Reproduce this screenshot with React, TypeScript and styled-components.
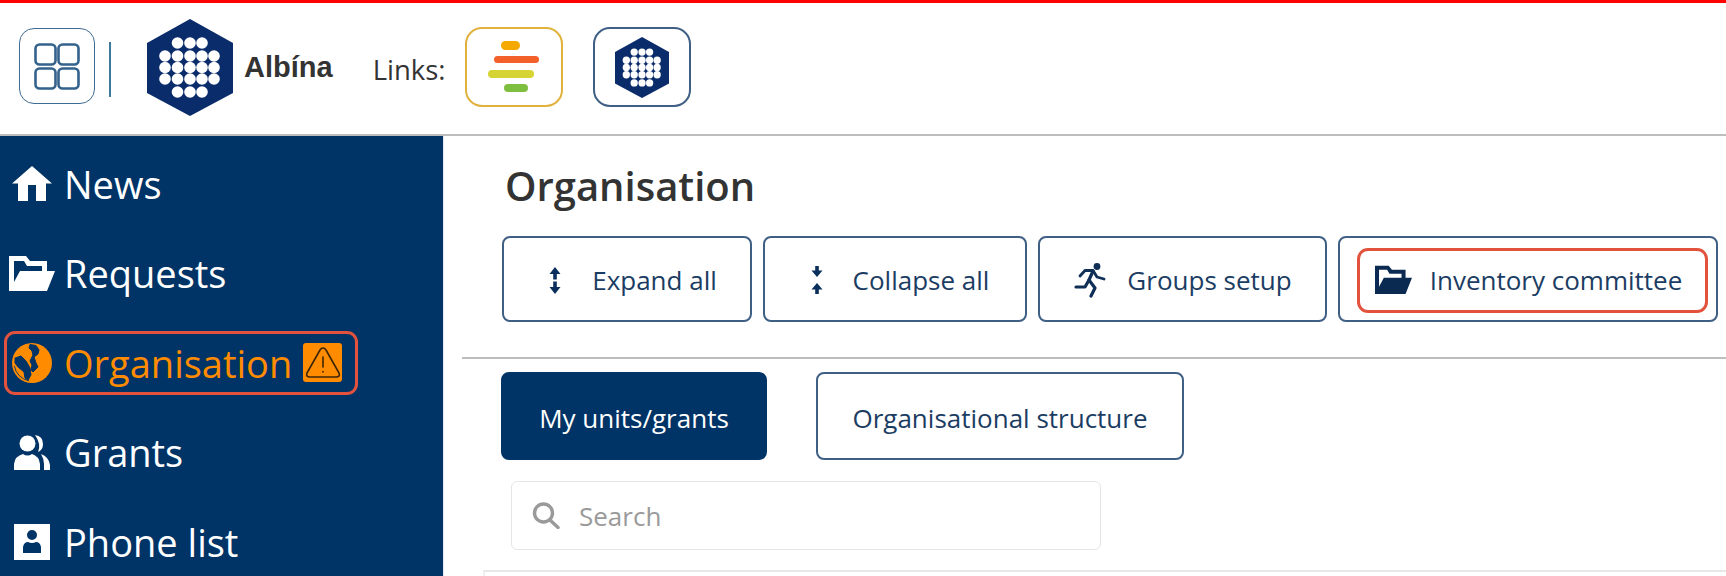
import React from 'react'
import styled, { createGlobalStyle } from 'styled-components'

const GlobalStyle = createGlobalStyle`
  html, body {
    margin: 0;
    padding: 0;
    background: #fff;
  }
  body {
    font-family: 'Open Sans', 'Noto Sans', sans-serif;
    overflow: hidden;
  }
`

const NAVY = '#003366'
const ORANGE = '#ff8c00'
const BORDER = '#3f5f85'

const Page = styled.div`
  width: 1726px;
  height: 576px;
  overflow: hidden;
  display: flex;
  flex-direction: column;
  border-top: 3px solid #ff0000;
  box-sizing: border-box;
`
const TopBar = styled.header`
  height: 133px;
  flex: none;
  box-sizing: border-box;
  border-bottom: 2px solid #bdbdbd;
  display: flex;
  align-items: center;
  padding: 0 0 2px 19px;
`
const GridButton = styled.button`
  width: 76px;
  height: 76px;
  margin-top: -3px;
  padding: 0;
  background: #fff;
  border: 1.5px solid #3f6a92;
  border-radius: 15px;
  display: flex;
  align-items: center;
  justify-content: center;
`
const Divider = styled.span`
  width: 2px;
  height: 55px;
  margin: 4px 36px 0 14px;
  background: #3d7a9c;
`
const BrandName = styled.span`
  margin: 0 0 1px 11px;
  font: bold 29px 'Liberation Sans', Arial, sans-serif;
  color: #333;
`
const LinksLabel = styled.span`
  margin: 3px 0 0 40px;
  font-size: 27.5px;
  color: #333;
`
const LinkButton = styled.a<{ $color: string; $gap: number }>`
  width: 98px;
  height: 80px;
  margin: -1px 0 0 ${(p) => p.$gap}px;
  box-sizing: border-box;
  border: 2px solid ${(p) => p.$color};
  border-radius: 17px;
  display: flex;
  align-items: center;
  justify-content: center;
`
const Body = styled.div`
  flex: 1;
  display: flex;
  min-height: 0;
`
const Sidebar = styled.nav`
  width: 443px;
  flex: none;
  background: ${NAVY};
  padding: 16px 0 0 4px;
  box-sizing: border-box;
  display: grid;
  grid-auto-rows: 63.5px;
  row-gap: 26px;
  align-content: start;
`
const NavItem = styled.a<{ $active?: boolean }>`
  width: 354px;
  box-sizing: border-box;
  display: flex;
  align-items: center;
  border: 3px solid ${(p) => (p.$active ? '#e2523c' : 'transparent')};
  border-radius: 11px;
  color: ${(p) => (p.$active ? ORANGE : '#fff')};
  font-size: 38px;
`
const NavIcon = styled.span`
  width: 57px;
  flex: none;
  display: flex;
  align-items: center;
  justify-content: center;
  padding-right: 7px;
  box-sizing: border-box;
`
const WarningBadge = styled.span`
  width: 39px;
  height: 39px;
  margin-left: 11px;
  background: ${ORANGE};
  border-radius: 3px;
  display: flex;
  align-items: center;
  justify-content: center;
`
const Main = styled.main`
  flex: 1;
  min-width: 0;
  border-left: 1px solid #e4e8ee;
  padding-left: 18px;
  display: flex;
  flex-direction: column;
`
const TitleBlock = styled.div`
  padding: 0 0 35px 40px;
  border-bottom: 2px solid #bdbdbd;
`
const Title = styled.h1`
  margin: 0;
  padding: 23px 0 0 3px;
  height: 100px;
  box-sizing: border-box;
  font-size: 40px;
  line-height: 54px;
  font-weight: 600;
  color: #333;
`
const Toolbar = styled.div`
  display: flex;
  gap: 11px;
`
const ToolButton = styled.button<{ $width: number; $gap: number; $shift?: number }>`
  width: ${(p) => p.$width}px;
  height: 86px;
  padding: 2px 0 0 ${(p) => p.$shift ?? 0}px;
  box-sizing: border-box;
  background: #fff;
  border: 2px solid ${BORDER};
  border-radius: 8px;
  display: flex;
  align-items: center;
  justify-content: center;
  gap: ${(p) => p.$gap}px;
  font: 26px 'Open Sans', sans-serif;
  color: #1c3d63;
`
const Highlight = styled.span`
  width: 351px;
  height: 65px;
  padding-right: 8px;
  box-sizing: border-box;
  border: 3px solid #e2523c;
  border-radius: 11px;
  display: flex;
  align-items: center;
  justify-content: center;
  gap: 18px;
`
const DarkIcon = styled.span`
  display: flex;
  color: #0b2a52;
`
const Tabs = styled.div`
  display: flex;
  gap: 49px;
  padding: 13px 0 0 39px;
`
const Tab = styled.button<{ $active?: boolean; $width: number }>`
  width: ${(p) => p.$width}px;
  height: 88px;
  padding: 3px 0 0;
  box-sizing: border-box;
  background: ${(p) => (p.$active ? NAVY : '#fff')};
  border: 2px solid ${(p) => (p.$active ? NAVY : BORDER)};
  border-radius: 8px;
  font: 26px 'Open Sans', sans-serif;
  color: ${(p) => (p.$active ? '#fff' : '#1c3d63')};
`
const SearchBox = styled.label`
  width: 590px;
  height: 69px;
  margin: 21px 0 0 49px;
  box-sizing: border-box;
  flex: none;
  border: 1.5px solid #e6e6e6;
  border-radius: 6px;
  display: flex;
  align-items: center;
  padding-left: 20px;
  gap: 19px;
`
const SearchInput = styled.input`
  flex: 1;
  min-width: 0;
  border: 0;
  outline: 0;
  padding: 0;
  font: 26px 'Open Sans', sans-serif;
  color: #333;
  &::placeholder {
    color: #9a9a9a;
    opacity: 1;
  }
`
const Panel = styled.div`
  flex: 1;
  margin: 20px 0 0 21px;
  border-top: 2px solid #e8e8e8;
  border-left: 2px solid #f0f0f0;
`

const dotRows: number[][] = [
  [37.5, 50, 62],
  [25, 37.5, 50, 62, 74],
  [25, 37.5, 50, 62, 74],
  [25, 37.5, 50, 62, 74],
  [37.5, 50, 62],
]
const dotY = [28, 41, 52.5, 64, 77]

const HexLogo = ({ height }: { height: number }) => (
  <svg viewBox="7 4 86 97" height={height} width={(height * 86) / 97}>
    <polygon points="50,4 93,28 93,78 50,101 7,78 7,28" fill="#0a2c6b" />
    {dotRows.map((row, i) =>
      row.map((x) => <circle key={`${i}-${x}`} cx={x} cy={dotY[i]} r={5.8} fill="#fff" />),
    )}
  </svg>
)

const GridIcon = () => (
  <svg width="46" height="47" viewBox="0 0 46 47" fill="none" stroke="#34628c" strokeWidth="2.6">
    <rect x="1.5" y="1.5" width="20" height="20" rx="4" />
    <rect x="24.5" y="1.5" width="20" height="20" rx="4" />
    <rect x="1.5" y="25.5" width="20" height="20" rx="4" />
    <rect x="24.5" y="25.5" width="20" height="20" rx="4" />
  </svg>
)

const BarsLogo = () => (
  <svg width="52" height="52" viewBox="0 0 52 52">
    <rect x="13" y="0" width="19" height="9" rx="4.5" fill="#f5a800" />
    <rect x="6" y="15" width="45" height="7" rx="3.5" fill="#f4602a" />
    <rect x="0" y="29" width="46" height="8" rx="4" fill="#d6d435" />
    <rect x="16" y="43" width="24" height="8" rx="4" fill="#7fbf3f" />
  </svg>
)

const HomeIcon = () => (
  <svg width="40" height="35" viewBox="0 0 40 35" fill="currentColor">
    <path d="M20 0 L40 17.5 H34 V35 H24 V19 H16 V35 H6 V17.5 H0 Z" />
  </svg>
)

const FolderIcon = ({ size = 46 }: { size?: number }) => (
  <svg width={size} height={(size * 37) / 46} viewBox="0 0 46 37" fill="currentColor">
    <path
      fillRule="evenodd"
      d="M0 1 H17 L21 6 H38 V16 H46 L38 36 H0 Z M5 6 V27 L11 16 H33 V11 H18 L15 6 Z"
    />
  </svg>
)

const GlobeIcon = () => (
  <svg width="40" height="40" viewBox="0 0 40 40">
    <circle cx="20" cy="20" r="20" fill="currentColor" />
    <path fill="none" stroke={NAVY} strokeWidth="0.9" d="M2.4 23 A18 18 0 0 0 17 37.8" />
    <path
      fill={NAVY}
      stroke={NAVY}
      strokeWidth="1"
      strokeLinejoin="round"
      d="M18 1.5 L24 2.5 L27 7 L26 11 L22 14 L24 20 L26 24 L21 29 L19 27 L20 22 L18 18 L21 12 L20 8 L17 5 Z"
    />
    <path
      fill={NAVY}
      stroke={NAVY}
      strokeWidth="1"
      strokeLinejoin="round"
      d="M3 15 L9 13 L14 18 L18 25 L19 32 L16 37 L13 35 L12 29 L6 24 L3 20 Z"
    />
  </svg>
)

const UsersIcon = () => (
  <svg width="36" height="35" viewBox="0 0 36 35" fill="currentColor">
    <circle cx="13.5" cy="8.5" r="8" />
    <path d="M0 35 V29 Q1 21 9 19 Q13.5 22 18 19 Q25 21 26 29 V35 Z" />
    <path d="M21 0 Q29 1 29 9 Q29 15 24 17 Q27.5 9 21 0 Z" />
    <path d="M27 19 Q35 22 36 30 V35 H30 V29 Q30 24 27 19 Z" />
  </svg>
)

const ContactIcon = () => (
  <svg width="36" height="36" viewBox="0 0 36 36" fill="currentColor">
    <path
      fillRule="evenodd"
      d="M0 0 H36 V36 H0 Z M18 6 A5 5 0 1 0 18 16 A5 5 0 1 0 18 6 Z M9 29 H27 V23 Q26 18 22 18 Q18 20 14 18 Q10 18 9 23 Z"
    />
  </svg>
)

const AlertIcon = () => (
  <svg width="36" height="33" viewBox="0 0 36 33" fill="none" stroke="#3d2606" strokeWidth="1.6" strokeLinecap="round" strokeLinejoin="round">
    <path d="M18 2 Q19.8 2 21 4 L34 27 Q35.5 31 31 31 H5 Q0.5 31 2 27 L15 4 Q16.2 2 18 2 Z" />
    <path d="M18 11 V21" />
    <path d="M18 25.5 V26" />
  </svg>
)

const ExpandIcon = () => (
  <svg width="12" height="27" viewBox="0 0 12 27" fill="#0b2f5c">
    <path d="M6 0 L11.5 7 H7.8 V12.5 H4.2 V7 H0.5 Z" />
    <path d="M6 27 L11.5 20 H7.8 V14.5 H4.2 V20 H0.5 Z" />
  </svg>
)

const CollapseIcon = () => (
  <svg width="12" height="28" viewBox="0 0 12 28" fill="#0b2f5c">
    <path d="M6 11 L11.5 4.5 H7.8 V0 H4.2 V4.5 H0.5 Z" />
    <path d="M6 17 L11.5 23.5 H7.8 V28 H4.2 V23.5 H0.5 Z" />
  </svg>
)

const RunnerIcon = () => (
  <svg width="33" height="36" viewBox="6 5 33 36" fill="none" stroke="#0f2f57" strokeWidth="2.8" strokeLinecap="round" strokeLinejoin="round">
    <circle cx="30" cy="9.5" r="3.4" fill="#0f2f57" stroke="none" />
    <path d="M13 19 L18 13.5 H26 L30 20 L37 22" />
    <path d="M26 14 L22 23 L28 31 L24 39" strokeWidth="3.2" />
    <path d="M22 23 L18 30 H9" strokeWidth="3.2" />
  </svg>
)

const SearchIcon = () => (
  <svg width="28" height="27" viewBox="0 0 28 27" fill="none" stroke="#9a9a9a" strokeWidth="3.4" strokeLinecap="round">
    <circle cx="11.5" cy="11" r="9" />
    <path d="M18 18 L26 25.5" />
  </svg>
)

const navItems = [
  { label: 'News', icon: <HomeIcon /> },
  { label: 'Requests', icon: <FolderIcon /> },
  { label: 'Organisation', icon: <GlobeIcon />, active: true },
  { label: 'Grants', icon: <UsersIcon /> },
  { label: 'Phone list', icon: <ContactIcon /> },
]

const App = () => {
  return (
    <Page>
      <GlobalStyle />
      <TopBar>
        <GridButton>
          <GridIcon />
        </GridButton>
        <Divider />
        <HexLogo height={97} />
        <BrandName>Albína</BrandName>
        <LinksLabel>Links:</LinksLabel>
        <LinkButton $color="#e0b23c" $gap={19}>
          <BarsLogo />
        </LinkButton>
        <LinkButton $color={BORDER} $gap={30}>
          <HexLogo height={61} />
        </LinkButton>
      </TopBar>
      <Body>
        <Sidebar>
          {navItems.map((item) => (
            <NavItem key={item.label} $active={item.active}>
              <NavIcon>{item.icon}</NavIcon>
              {item.label}
              {item.active && (
                <WarningBadge>
                  <AlertIcon />
                </WarningBadge>
              )}
            </NavItem>
          ))}
        </Sidebar>
        <Main>
          <TitleBlock>
            <Title>Organisation</Title>
            <Toolbar>
              <ToolButton $width={250} $gap={31} $shift={12}>
                <ExpandIcon />
                Expand all
              </ToolButton>
              <ToolButton $width={264} $gap={30} $shift={10}>
                <CollapseIcon />
                Collapse all
              </ToolButton>
              <ToolButton $width={289} $gap={21}>
                <RunnerIcon />
                Groups setup
              </ToolButton>
              <ToolButton $width={380} $gap={0} $shift={9}>
                <Highlight>
                  <DarkIcon>
                    <FolderIcon size={37} />
                  </DarkIcon>
                  Inventory committee
                </Highlight>
              </ToolButton>
            </Toolbar>
          </TitleBlock>
          <Tabs>
            <Tab $active $width={266}>
              My units/grants
            </Tab>
            <Tab $width={368}>Organisational structure</Tab>
          </Tabs>
          <SearchBox>
            <SearchIcon />
            <SearchInput placeholder="Search" readOnly />
          </SearchBox>
          <Panel />
        </Main>
      </Body>
    </Page>
  )
}

export default App
